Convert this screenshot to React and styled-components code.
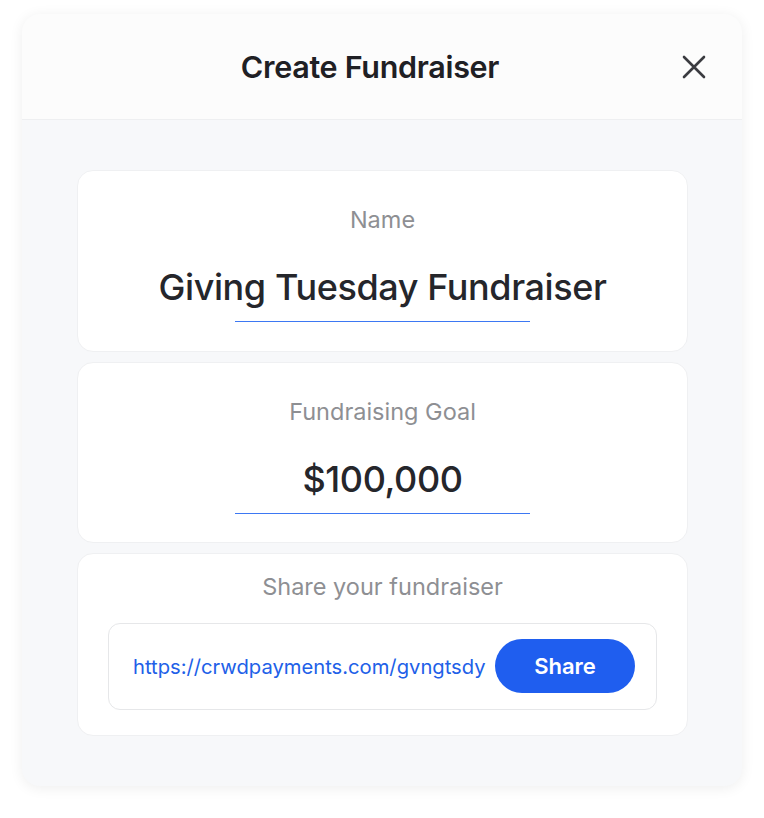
import React from "react";
import styled, { createGlobalStyle } from "styled-components";

const GlobalStyle = createGlobalStyle`
  body {
    margin: 0;
    background: #ffffff;
    font-family: Inter, "Noto Sans", sans-serif;
  }
`;

const Page = styled.div`
  padding: 14px 22px 32px;
`;

const Modal = styled.section`
  width: 720px;
  border-radius: 18px;
  overflow: hidden;
  background: #f7f8fa;
  box-shadow: 0 2px 14px rgba(0, 0, 0, 0.07);
`;

const Header = styled.header`
  height: 106px;
  display: flex;
  align-items: center;
  justify-content: center;
  padding-right: 24px;
  position: relative;
  background: #fcfcfc;
  border-bottom: 1px solid #eeeff1;
  box-sizing: border-box;
`;

const Title = styled.h2`
  margin: 0;
  font-size: 30.5px;
  font-weight: 600;
  color: #1f2024;
  letter-spacing: -0.3px;
`;

const CloseButton = styled.button`
  position: absolute;
  right: 34px;
  top: 39px;
  width: 28px;
  height: 28px;
  padding: 0;
  border: none;
  background: none;
  color: #3a3b40;
  cursor: pointer;
`;

const Body = styled.div`
  padding: 50px 54px 50px 55px;
  display: flex;
  flex-direction: column;
  gap: 10px;
`;

const Card = styled.div`
  background: #ffffff;
  border: 1px solid #eff0f2;
  border-radius: 16px;
  padding: ${(p) => p.$pad};
  display: flex;
  flex-direction: column;
  align-items: center;
`;

const Label = styled.div`
  font-size: 23.5px;
  line-height: 28px;
  color: #8e8f93;
`;

const Field = styled.div`
  margin-top: 31px;
  width: 295px;
  display: flex;
  flex-direction: column;
  align-items: center;
  gap: 12px;
`;

const Value = styled.div`
  white-space: nowrap;
  font-size: 36px;
  line-height: 44px;
  font-weight: 500;
  color: #25262b;
  letter-spacing: -0.4px;
`;

const Underline = styled.div`
  align-self: stretch;
  height: 1px;
  background: #3d78f3;
`;

const LinkBox = styled.div`
  margin-top: 22px;
  align-self: stretch;
  border: 1.5px solid #e6e7e9;
  border-radius: 12px;
  padding: 15px 21px 16px 24px;
  display: flex;
  align-items: center;
  justify-content: space-between;
`;

const Url = styled.span`
  font-size: 20.2px;
  color: #2160e8;
  white-space: nowrap;
`;

const ShareButton = styled.button`
  width: 140px;
  height: 54px;
  flex-shrink: 0;
  border: none;
  border-radius: 27px;
  background: #1f5eef;
  color: #ffffff;
  font-family: inherit;
  font-size: 22px;
  font-weight: 600;
  cursor: pointer;
`;

export default function App() {
  return (
    <Page>
      <GlobalStyle />
      <Modal>
        <Header>
          <Title>Create Fundraiser</Title>
          <CloseButton aria-label="Close">
            <svg width="28" height="28" viewBox="0 0 28 28" fill="none">
              <path
                d="M4 4L24 24M24 4L4 24"
                stroke="currentColor"
                strokeWidth="2.6"
                strokeLinecap="round"
              />
            </svg>
          </CloseButton>
        </Header>
        <Body>
          <Card $pad="35px 0 29px">
            <Label>Name</Label>
            <Field>
              <Value>Giving Tuesday Fundraiser</Value>
              <Underline />
            </Field>
          </Card>
          <Card $pad="35px 0 28px">
            <Label>Fundraising Goal</Label>
            <Field>
              <Value>$100,000</Value>
              <Underline />
            </Field>
          </Card>
          <Card $pad="19px 30px 25px">
            <Label>Share your fundraiser</Label>
            <LinkBox>
              <Url>https://crwdpayments.com/gvngtsdy</Url>
              <ShareButton>Share</ShareButton>
            </LinkBox>
          </Card>
        </Body>
      </Modal>
    </Page>
  );
}
